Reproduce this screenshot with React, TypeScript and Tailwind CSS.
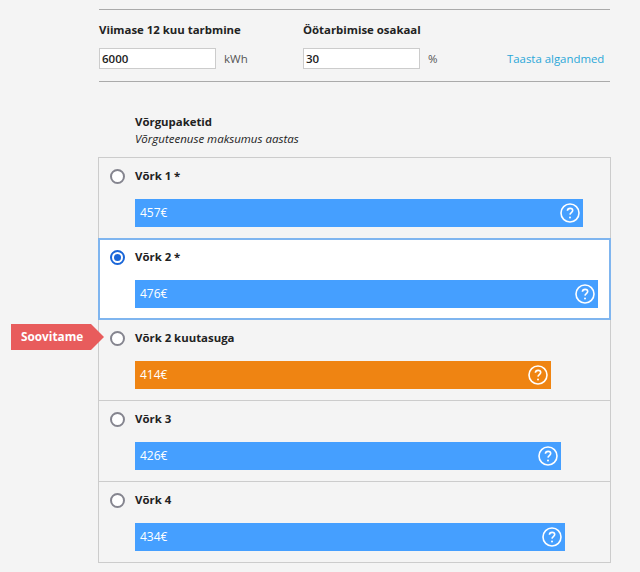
const packages = [
  { name: 'Võrk 1 *', price: '457€', width: 448, color: 'bg-[#459fff]' },
  { name: 'Võrk 2 *', price: '476€', width: 463, color: 'bg-[#459fff]', selected: true },
  { name: 'Võrk 2 kuutasuga', price: '414€', width: 416, color: 'bg-[#ef8412]', recommended: true },
  { name: 'Võrk 3', price: '426€', width: 426, color: 'bg-[#459fff]' },
  { name: 'Võrk 4', price: '434€', width: 430, color: 'bg-[#459fff]' },
]

function HelpIcon() {
  return (
    <svg width="20" height="20" viewBox="0 0 20 20" fill="none" className="shrink-0">
      <circle cx="10" cy="10" r="9" stroke="white" strokeWidth="1.6" />
      <path
        d="M7.4 7.8c.1-1.5 1.2-2.4 2.7-2.4 1.5 0 2.6.9 2.6 2.2 0 1.9-2.6 2-2.7 4"
        stroke="white"
        strokeWidth="1.6"
      />
      <circle cx="10" cy="14.4" r="1" fill="white" />
    </svg>
  )
}

function Radio({ selected }: { selected?: boolean }) {
  if (selected) {
    return (
      <span className="flex h-[15px] w-[15px] items-center justify-center rounded-full border-2 border-[#1a66d8] bg-white">
        <span className="h-[7px] w-[7px] rounded-full bg-[#1a66d8]" />
      </span>
    )
  }
  return <span className="h-[15px] w-[15px] rounded-full border-2 border-[#85858f] bg-white" />
}

function App() {
  return (
    <div
      className="h-[572px] w-[640px] overflow-hidden bg-[#f4f4f4] pt-[9px] pl-[99px] text-[#222222]"
      style={{ fontFamily: '"Open Sans", sans-serif' }}
    >
      <div className="h-[73px] w-[511px] border-y border-[#aaaaaa] pt-[12px]">
        <div className="flex">
          <div className="w-[204px]">
            <div className="text-[11.4px] leading-[16px] font-bold">Viimase 12 kuu tarbmine</div>
            <div className="mt-[10px] flex items-center">
              <div className="flex h-[21px] w-[117px] items-center border border-[#cccccc] bg-white pl-[2px] text-[11.5px] font-semibold">
                6000
              </div>
              <span className="ml-[8px] text-[11.5px] text-[#555555]">kWh</span>
            </div>
          </div>
          <div className="w-[204px]">
            <div className="text-[11.4px] leading-[16px] font-bold">Öötarbimise osakaal</div>
            <div className="mt-[10px] flex items-center">
              <div className="flex h-[21px] w-[117px] items-center border border-[#cccccc] bg-white pl-[2px] text-[11.5px] font-semibold">
                30
              </div>
              <span className="ml-[8px] text-[11.5px] text-[#555555]">%</span>
            </div>
          </div>
          <div className="mt-[26px] text-[11.4px] leading-[21px] text-[#2aa7d8]">Taasta algandmed</div>
        </div>
      </div>

      <div className="mt-[32px] pl-[36px]">
        <div className="text-[11.4px] leading-[16px] font-bold">Võrgupaketid</div>
        <div className="mt-px text-[11.5px] leading-[16px] italic">Võrguteenuse maksumus aastas</div>
      </div>

      <div className="mt-[10px] -ml-px w-[513px] border border-[#cccccc]">
        {packages.map((item, index) => (
          <div
            key={index}
            className={
              item.selected
                ? 'relative -mx-px -mt-px h-[82px] border-2 border-[#7fb5ef] bg-white pt-[9px] pl-[10px]'
                : 'relative h-[81px] border-b border-[#cccccc] pt-[10px] pl-[11px] last:h-[80px] last:border-b-0'
            }
          >
            {item.recommended && (
              <div className="absolute top-[4px] -left-[88px] flex h-[26px] w-[80px] items-center bg-[#e85c5c] pl-[10px] text-[11.8px] font-bold text-white">
                Soovitame
                <span className="absolute top-0 -right-[13px] h-0 w-0 border-y-[13px] border-l-[13px] border-y-transparent border-l-[#e85c5c]" />
              </div>
            )}
            <div className="flex h-[16px] items-center">
              <Radio selected={item.selected} />
              <span className="ml-[10px] text-[11.4px] font-bold">{item.name}</span>
            </div>
            <div
              className={`mt-[15px] ml-[25px] flex h-[28px] items-center justify-between pr-[3px] pl-[5px] text-[12px] text-white ${item.color}`}
              style={{ width: item.width }}
            >
              <span>{item.price}</span>
              <HelpIcon />
            </div>
          </div>
        ))}
      </div>
    </div>
  )
}

export default App
